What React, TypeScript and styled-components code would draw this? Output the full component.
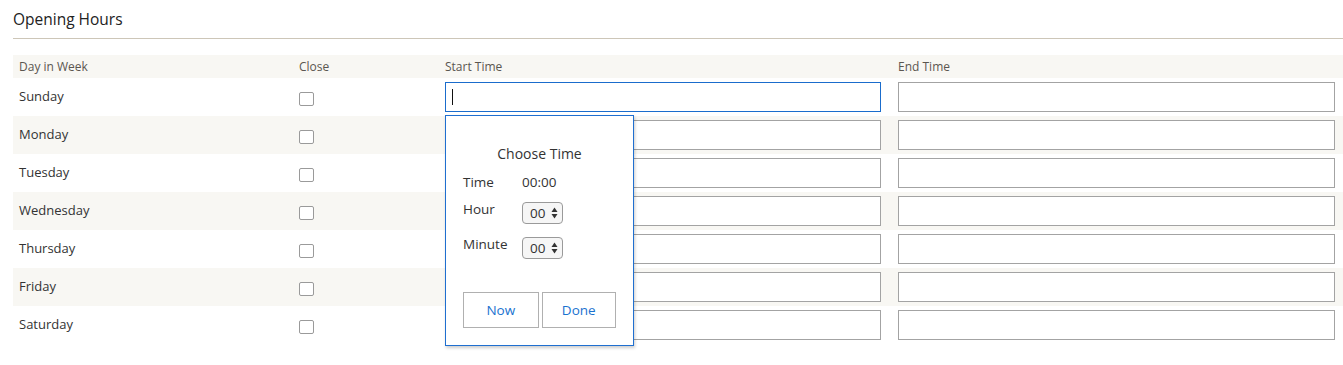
import React from "react";
import styled, { createGlobalStyle } from "styled-components";

const GlobalStyle = createGlobalStyle`
    html, body {
        margin: 0;
        padding: 0;
        background: #ffffff;
        font-family: "Open Sans", "Liberation Sans", sans-serif;
    }
`;

const Page = styled.main`
    width: 1343px;
    height: 365px;
    padding: 9px 0 0 13px;
    box-sizing: border-box;
`;

const Title = styled.h3`
    margin: 0;
    padding-bottom: 9px;
    font-size: 15.5px;
    line-height: 20px;
    font-weight: 400;
    color: #222;
    border-bottom: 1px solid #cdc6b8;
`;

const Table = styled.table`
    margin-top: 16px;
    width: 1330px;
    border-collapse: collapse;
    table-layout: fixed;
    font-size: 13px;
`;

const HeadRow = styled.tr`
    background: #f8f7f3;
    height: 23px;
`;

const HeadCell = styled.th<{ w: number }>`
    width: ${(p) => p.w - 12}px;
    padding: 0 6px;
    text-align: left;
    font-weight: 400;
    font-size: 12px;
    color: #5b5650;
`;

const Row = styled.tr<{ striped: boolean }>`
    height: 38px;
    background: ${(p) => (p.striped ? "#f8f7f3" : "#ffffff")};
`;

const Cell = styled.td`
    padding: 0 6px;
    color: #333;
    vertical-align: middle;
    position: relative;
`;

const DayName = styled.span`
    position: relative;
    top: -1px;
`;

const Check = styled.span`
    display: block;
    width: 13px;
    height: 12px;
    margin-top: 3px;
    border: 1px solid #9a9a9a;
    border-radius: 2px;
    background: #fff;
`;

const TimeInput = styled.div<{ focused?: boolean; right: number }>`
    height: 30px;
    margin-right: ${(p) => p.right}px;
    box-sizing: border-box;
    border: 1px solid ${(p) => (p.focused ? "#1a6ccc" : "#a3a3a3")};
    background: #fff;
    display: flex;
    align-items: center;
    padding-left: 6px;
`;

const Caret = styled.span`
    width: 1px;
    height: 16px;
    background: #111;
`;

const Picker = styled.div`
    position: absolute;
    left: 6px;
    top: 37px;
    width: 189px;
    height: 231px;
    box-sizing: border-box;
    border: 1px solid #1f6fd0;
    background: #fff;
    box-shadow: 1px 2px 3px rgba(0, 0, 0, 0.2);
    padding: 28px 17px 0 17px;
    z-index: 5;
    color: #333;
    font-size: 13.5px;
`;

const PickerTitle = styled.div`
    text-align: center;
    font-size: 14px;
    margin-bottom: 10px;
`;

const PickerRow = styled.div<{ gap: number }>`
    display: grid;
    grid-template-columns: 59px auto;
    align-items: start;
    margin-bottom: ${(p) => p.gap}px;
    line-height: 18px;
`;

const Spinner = styled.div`
    width: 41px;
    height: 22px;
    box-sizing: border-box;
    margin-top: 2px;
    border: 1px solid #9a9a9a;
    border-radius: 4px;
    background: #f6f6f6;
    display: flex;
    align-items: center;
    justify-content: space-between;
    padding: 0 4px 0 7px;
    font-size: 13.5px;
`;

const Buttons = styled.div`
    display: flex;
    gap: 3px;
    margin-top: 33px;
`;

const PickButton = styled.button<{ w: number }>`
    width: ${(p) => p.w}px;
    height: 36px;
    border: 1px solid #b0b0b0;
    background: #fff;
    color: #1a72cf;
    font-family: inherit;
    font-size: 13.5px;
    padding: 0;
`;

const days = ["Sunday", "Monday", "Tuesday", "Wednesday", "Thursday", "Friday", "Saturday"];

const Arrows = () => (
    <svg width="7" height="12" viewBox="0 0 7 12">
        <path d="M3.5 0.5 L6.5 5 H0.5 Z" fill="#333" />
        <path d="M3.5 11.5 L6.5 7 H0.5 Z" fill="#333" />
    </svg>
);

const TimePicker: React.FC = () => (
    <Picker>
        <PickerTitle>Choose Time</PickerTitle>
        <PickerRow gap={9}>
            <span>Time</span>
            <span>00:00</span>
        </PickerRow>
        <PickerRow gap={11}>
            <span>Hour</span>
            <Spinner>
                00
                <Arrows />
            </Spinner>
        </PickerRow>
        <PickerRow gap={0}>
            <span>Minute</span>
            <Spinner>
                00
                <Arrows />
            </Spinner>
        </PickerRow>
        <Buttons>
            <PickButton w={76}>Now</PickButton>
            <PickButton w={75}>Done</PickButton>
        </Buttons>
    </Picker>
);

const App: React.FC = () => {
    return (
        <Page>
            <GlobalStyle />
            <Title>Opening Hours</Title>
            <Table>
                <thead>
                    <HeadRow>
                        <HeadCell w={280}>Day in Week</HeadCell>
                        <HeadCell w={146}>Close</HeadCell>
                        <HeadCell w={453}>Start Time</HeadCell>
                        <HeadCell w={451}>End Time</HeadCell>
                    </HeadRow>
                </thead>
                <tbody>
                    {days.map((day, i) => (
                        <Row key={day} striped={i % 2 === 1}>
                            <Cell>
                                <DayName>{day}</DayName>
                            </Cell>
                            <Cell>
                                <Check />
                            </Cell>
                            <Cell>
                                <TimeInput focused={i === 0} right={5}>
                                    {i === 0 && <Caret />}
                                </TimeInput>
                                {i === 0 && <TimePicker />}
                            </Cell>
                            <Cell>
                                <TimeInput right={2} />
                            </Cell>
                        </Row>
                    ))}
                </tbody>
            </Table>
        </Page>
    );
};

export default App;
